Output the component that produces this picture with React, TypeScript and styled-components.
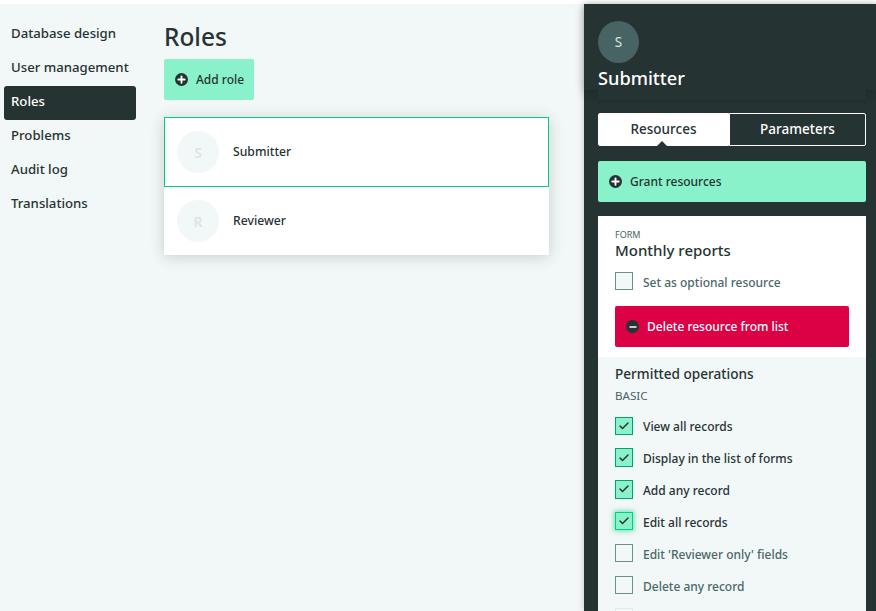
import React from 'react';
import styled, { createGlobalStyle } from 'styled-components';
import { Check, Minus, Plus } from 'lucide-react';

const GlobalStyle = createGlobalStyle`
  html, body {
    margin: 0;
    height: 100%;
    background: #fff;
    overflow: hidden;
  }
  * {
    box-sizing: border-box;
  }
  body {
    font-family: "Noto Sans", "Open Sans", sans-serif;
    color: #263333;
  }
`;

const Page = styled.div`
  display: flex;
  height: 611px;
  padding-top: 4px;
  overflow: hidden;
`;

const Main = styled.div`
  display: flex;
  flex: 1;
  min-width: 0;
  background: #f2f7f7;
`;

const Nav = styled.nav`
  display: flex;
  flex-direction: column;
  width: 132px;
  margin: 14px 0 0 4px;
`;

const NavItem = styled.a<{ $active?: boolean }>`
  display: block;
  height: 34px;
  padding: 5px 7px 0;
  border-radius: 3px;
  font-size: 13.2px;
  line-height: 20px;
  font-weight: 500;
  white-space: nowrap;
  color: ${(p) => (p.$active ? '#fff' : '#263333')};
  background: ${(p) => (p.$active ? '#263333' : 'transparent')};
`;

const Content = styled.div`
  width: 385px;
  margin-left: 28px;
  padding-top: 16px;
`;

const Title = styled.h1`
  margin: 0 0 6px;
  height: 33px;
  font-size: 24.4px;
  line-height: 33px;
  font-weight: 500;
`;

const ActionButton = styled.button<{ $danger?: boolean; $wide?: boolean }>`
  display: flex;
  align-items: center;
  gap: 8px;
  width: ${(p) => (p.$wide ? '100%' : '90px')};
  height: 41px;
  padding: 0 11px 1px;
  border: 0;
  border-radius: 2px;
  font-family: inherit;
  font-size: 12px;
  font-weight: 500;
  white-space: nowrap;
  color: ${(p) => (p.$danger ? '#fff' : '#263333')};
  background: ${(p) => (p.$danger ? '#dc0044' : '#8af2cb')};
`;

const ButtonIcon = styled.span`
  display: flex;
  align-items: center;
  justify-content: center;
  flex: none;
  width: 13px;
  height: 13px;
  margin-top: 1px;
  border-radius: 50%;
  color: #fff;
  background: #263333;
`;

const RoleList = styled.div`
  margin-top: 17px;
  background: #fff;
  box-shadow: 0 2px 14px rgba(38, 51, 51, 0.2);
`;

const RoleRow = styled.div<{ $selected?: boolean }>`
  display: flex;
  align-items: center;
  gap: 14px;
  height: ${(p) => (p.$selected ? '70px' : '68px')};
  padding-left: ${(p) => (p.$selected ? '12px' : '13px')};
  border: ${(p) => (p.$selected ? '1px solid #00d084' : '0')};
`;

const RoleAvatar = styled.div`
  display: flex;
  align-items: center;
  justify-content: center;
  width: 42px;
  height: 42px;
  border-radius: 50%;
  font-size: 14px;
  font-weight: 600;
  color: #d9e8e4;
  background: #f2f7f7;
`;

const RoleName = styled.span`
  padding-bottom: 1px;
  font-size: 12.2px;
  font-weight: 500;
`;

const Panel = styled.aside`
  display: flex;
  flex-direction: column;
  flex: none;
  width: 292px;
  background: #263333;
  box-shadow: 0 0 6px rgba(38, 51, 51, 0.25);
`;

const PanelHeader = styled.div`
  height: 87px;
  padding: 17px 14px 0;
  box-shadow: 0 3px 9px rgba(10, 20, 20, 0.28);
`;

const PanelAvatar = styled.div`
  display: flex;
  align-items: center;
  justify-content: center;
  width: 41px;
  height: 42px;
  border-radius: 50%;
  font-size: 13.5px;
  color: #d9e8e4;
  background: #476363;
`;

const PanelTitle = styled.h2`
  margin: 3px 0 0;
  font-size: 18.2px;
  line-height: 24px;
  font-weight: 500;
  color: #fff;
`;

const PanelBody = styled.div`
  display: flex;
  flex-direction: column;
  flex: 1;
  margin: 0 10px 0 14px;
`;

const HeaderTail = styled.div`
  position: relative;
  height: 10px;
  margin-bottom: 13px;
  background: #263333;
  box-shadow: 0 2px 3px rgba(10, 20, 20, 0.06);
`;

const Tabs = styled.div`
  display: flex;
  flex: none;
  height: 33px;
  margin-bottom: 15px;
`;

const Tab = styled.div<{ $active?: boolean }>`
  position: relative;
  display: flex;
  align-items: center;
  justify-content: center;
  padding-bottom: 1px;
  font-size: 13.5px;
  font-weight: 500;
  width: ${(p) => (p.$active ? '131px' : '137px')};
  color: ${(p) => (p.$active ? '#263333' : '#fff')};
  background: ${(p) => (p.$active ? '#fff' : 'transparent')};
  border: 1px solid #fff;
  border-radius: ${(p) => (p.$active ? '2px 0 0 2px' : '0 2px 2px 0')};

  ${(p) =>
    p.$active &&
    `&::after {
      content: '';
      position: absolute;
      left: 58px;
      bottom: -1px;
      border: 5px solid transparent;
      border-top: 0;
      border-bottom-color: #263333;
    }`}
`;

const ResourceCard = styled.div`
  height: 141px;
  margin-top: 14px;
  padding: 14px 17px 0;
  background: #fff;
`;

const Eyebrow = styled.div`
  font-size: 9px;
  line-height: 10px;
  color: #476363;
`;

const ResourceName = styled.div`
  margin-bottom: 12px;
  font-size: 15px;
  line-height: 20px;
  font-weight: 500;
`;

const Operations = styled.div`
  flex: 1;
  padding: 7px 17px 0;
  background: #f2f7f7;
`;

const SectionTitle = styled.div`
  font-size: 13.6px;
  line-height: 20px;
  font-weight: 500;
`;

const GroupLabel = styled.div`
  margin: 4px 0 12.6px;
  font-size: 11.6px;
  line-height: 16px;
  color: #476363;
`;

const CheckRow = styled.label`
  display: flex;
  align-items: center;
  gap: 10px;
  height: 18.2px;
  margin-bottom: 13.7px;
`;

const OptionalRow = styled(CheckRow)`
  height: 18px;
  margin-bottom: 16px;
`;

const CheckBox = styled.span<{ $checked?: boolean; $focused?: boolean; $faint?: boolean }>`
  display: flex;
  align-items: center;
  justify-content: center;
  flex: none;
  width: 18px;
  height: 100%;
  color: #263333;
  border: 1px solid
    ${(p) => (p.$faint ? '#e2eaea' : p.$focused ? '#00d084' : p.$checked ? '#00a078' : '#6a9090')};
  background: ${(p) => (p.$checked ? '#8af2cb' : '#f2f7f7')};
  box-shadow: ${(p) => (p.$focused ? '0 0 5px 1px rgba(0, 208, 132, 0.6)' : 'none')};
`;

const CheckLabel = styled.span<{ $muted?: boolean }>`
  position: relative;
  top: 1px;
  font-size: 12px;
  font-weight: 500;
  white-space: nowrap;
  color: ${(p) => (p.$muted ? '#4a6868' : '#263333')};
`;

const navItems = ['Database design', 'User management', 'Roles', 'Problems', 'Audit log', 'Translations'];

const operations = [
  { label: 'View all records', checked: true },
  { label: 'Display in the list of forms', checked: true },
  { label: 'Add any record', checked: true },
  { label: 'Edit all records', checked: true, focused: true },
  { label: "Edit 'Reviewer only' fields" },
  { label: 'Delete any record' },
];

const App = () => {
  return (
    <>
      <GlobalStyle />
      <Page>
        <Main>
          <Nav>
            {navItems.map((item) => (
              <NavItem key={item} $active={item === 'Roles'}>
                {item}
              </NavItem>
            ))}
          </Nav>
          <Content>
            <Title>Roles</Title>
            <ActionButton>
              <ButtonIcon>
                <Plus size={11} strokeWidth={4} />
              </ButtonIcon>
              Add role
            </ActionButton>
            <RoleList>
              <RoleRow $selected>
                <RoleAvatar>S</RoleAvatar>
                <RoleName>Submitter</RoleName>
              </RoleRow>
              <RoleRow>
                <RoleAvatar>R</RoleAvatar>
                <RoleName>Reviewer</RoleName>
              </RoleRow>
            </RoleList>
          </Content>
        </Main>
        <Panel>
          <PanelHeader>
            <PanelAvatar>S</PanelAvatar>
            <PanelTitle>Submitter</PanelTitle>
          </PanelHeader>
          <PanelBody>
            <HeaderTail />
            <Tabs>
              <Tab $active>Resources</Tab>
              <Tab>Parameters</Tab>
            </Tabs>
            <ActionButton $wide>
              <ButtonIcon>
                <Plus size={11} strokeWidth={4} />
              </ButtonIcon>
              Grant resources
            </ActionButton>
            <ResourceCard>
              <Eyebrow>FORM</Eyebrow>
              <ResourceName>Monthly reports</ResourceName>
              <OptionalRow>
                <CheckBox />
                <CheckLabel $muted>Set as optional resource</CheckLabel>
              </OptionalRow>
              <ActionButton $wide $danger>
                <ButtonIcon>
                  <Minus size={10} strokeWidth={4} />
                </ButtonIcon>
                Delete resource from list
              </ActionButton>
            </ResourceCard>
            <Operations>
              <SectionTitle>Permitted operations</SectionTitle>
              <GroupLabel>BASIC</GroupLabel>
              {operations.map((op) => (
                <CheckRow key={op.label}>
                  <CheckBox $checked={op.checked} $focused={op.focused}>
                    {op.checked && <Check size={12} strokeWidth={3} />}
                  </CheckBox>
                  <CheckLabel $muted={!op.checked}>{op.label}</CheckLabel>
                </CheckRow>
              ))}
              <CheckRow>
                <CheckBox $faint />
              </CheckRow>
            </Operations>
          </PanelBody>
        </Panel>
      </Page>
    </>
  );
};

export default App;
